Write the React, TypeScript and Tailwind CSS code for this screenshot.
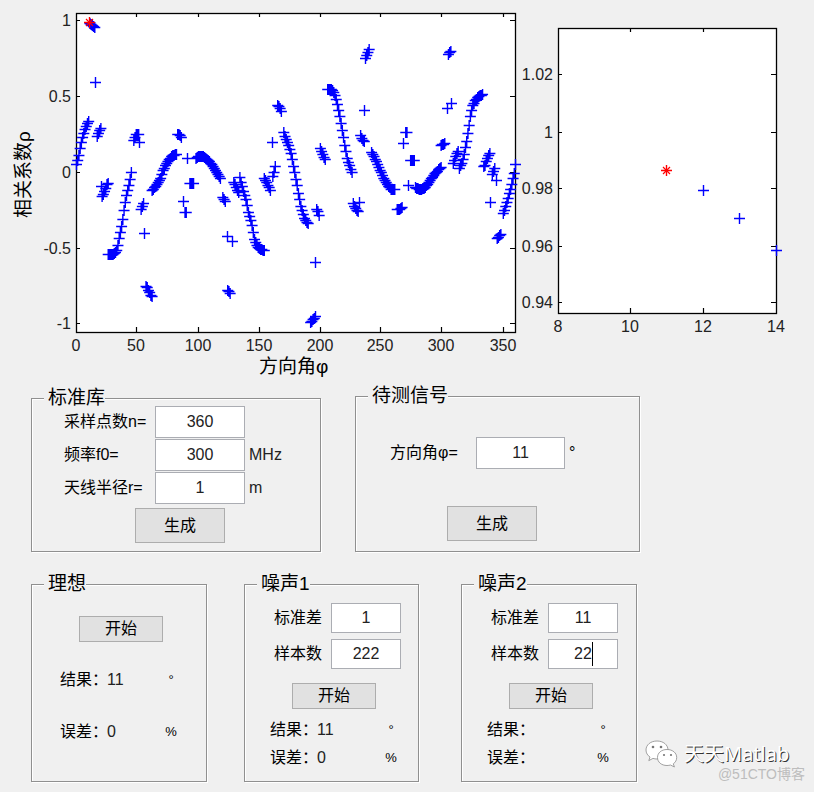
import { useState, type ReactNode } from 'react';

type Point = [number, number];

// Anchors of each branch of the correlation curve, in plot coordinates.
// A marker is drawn for every whole degree between the first and last anchor.
const BRANCHES: Point[][] = [
  [[76, 164], [78, 158], [79, 151], [81, 141], [84, 131], [86, 125], [88, 121]],
  [[90, 23], [91, 24], [92, 25], [94, 27]],
  [[95, 82]],
  [[97, 136], [100, 128]],
  [[101, 186]],
  [[102, 196], [104, 191], [107, 183]],
  [[108, 254], [112, 254], [115, 252], [117, 248], [119, 236], [122, 222], [124, 207], [126, 195], [129, 183], [131, 171]],
  [[133, 141], [134, 138], [136, 134], [138, 134]],
  [[139, 142]],
  [[141, 209], [143, 203]],
  [[144, 233]],
  [[146, 286], [151, 296]],
  [[152, 190], [155, 186], [160, 178], [163, 169], [167, 162], [171, 156], [176, 154]],
  [[178, 134], [179, 134], [181, 137]],
  [[183, 201]],
  [[185, 212], [186, 212]],
  [[187, 158]],
  [[190, 183], [193, 183]],
  [[196, 158], [198, 156], [203, 156], [207, 159], [212, 165], [216, 172], [220, 178]],
  [[222, 197], [225, 201]],
  [[227, 236]],
  [[227, 290], [230, 293]],
  [[232, 241]],
  [[233, 181], [238, 192]],
  [[239, 176], [241, 183], [243, 191], [246, 201], [248, 212], [251, 222], [254, 239], [257, 246], [260, 249], [263, 250]],
  [[264, 178], [270, 190]],
  [[272, 142]],
  [[272, 177], [274, 171], [275, 165]],
  [[277, 105], [279, 107], [281, 111]],
  [[283, 131], [285, 137], [288, 144], [291, 154], [293, 166], [296, 181], [298, 193], [300, 204], [302, 212], [304, 218], [307, 223]],
  [[310, 322], [312, 320], [315, 316]],
  [[315, 262]],
  [[317, 209], [319, 216]],
  [[320, 148], [325, 160]],
  [[327, 89], [331, 89], [334, 93], [337, 104], [339, 114], [341, 125], [343, 137], [345, 149], [347, 159], [350, 168], [352, 173]],
  [[353, 203], [355, 208], [357, 211]],
  [[359, 202]],
  [[360, 135], [363, 141]],
  [[364, 110]],
  [[365, 58], [367, 53], [369, 48]],
  [[371, 152], [375, 159], [378, 166], [382, 175], [385, 181], [388, 186], [391, 189], [394, 189]],
  [[397, 209], [399, 209], [401, 207]],
  [[403, 143]],
  [[405, 132], [406, 132]],
  [[408, 185]],
  [[410, 160], [413, 160]],
  [[415, 187], [419, 189], [424, 188], [429, 181], [434, 174], [440, 167]],
  [[441, 145], [444, 143]],
  [[447, 108]],
  [[448, 54], [450, 51]],
  [[451, 103]],
  [[453, 163], [457, 151]],
  [[459, 168], [462, 161], [464, 153], [466, 142], [468, 130], [470, 115], [472, 106], [475, 100], [478, 96], [482, 94]],
  [[484, 166], [489, 153]],
  [[490, 202]],
  [[492, 174], [494, 168]],
  [[496, 180]],
  [[497, 238], [500, 234]],
  [[503, 213], [505, 207], [508, 197], [510, 189], [512, 181], [514, 172], [515, 164]],
];

const DEGREE = 439 / 360;

function sample(branch: Point[]): Point[] {
  const first = branch[0];
  const last = branch[branch.length - 1];
  if (branch.length === 1) return [first];
  const points: Point[] = [];
  for (let deg = 0; deg <= 360; deg++) {
    const x = 76 + deg * DEGREE;
    if (x < first[0] - 0.8 || x > last[0] + 0.8) continue;
    let i = 1;
    while (i < branch.length - 1 && branch[i][0] < x) i++;
    const [x0, y0] = branch[i - 1];
    const [x1, y1] = branch[i];
    const t = Math.min(1, Math.max(0, (x - x0) / (x1 - x0)));
    points.push([x, Math.round(y0 + (y1 - y0) * t)]);
  }
  return points;
}

const CURVE = BRANCHES.flatMap(sample);

function Crosses({ points }: { points: Point[] }) {
  const d = points.map(([x, y]) => `M${x - 5} ${y + 0.5}h11M${x + 0.5} ${y - 5}v11`).join('');
  return <path d={d} stroke="#0000ff" strokeWidth="1.4" fill="none" />;
}

function Star({ x, y }: { x: number; y: number }) {
  return (
    <g transform={`translate(${x + 0.5} ${y + 0.5})`} stroke="#ff0000" strokeWidth="1.4" fill="none">
      <path d="M-5.5 0h11M0-5.5v11" />
      <path d="M-3.5-3.5l7 7M-3.5 3.5l7-7" strokeWidth="1.2" />
    </g>
  );
}

interface Tick {
  at: number;
  label: string;
}

interface AxesProps {
  left: number;
  top: number;
  right: number;
  bottom: number;
  xTicks: Tick[];
  yTicks: Tick[];
  children: ReactNode;
}

function Axes({ left, top, right, bottom, xTicks, yTicks, children }: AxesProps) {
  const ticks =
    xTicks
      .filter((t) => t.at > left && t.at < right)
      .map((t) => `M${t.at + 0.5} ${top}v4M${t.at + 0.5} ${bottom}v-5`)
      .join('') + yTicks.map((t) => `M${left} ${t.at + 0.5}h4M${right} ${t.at + 0.5}h-5`).join('');
  return (
    <>
      <rect
        x={left + 0.5}
        y={top + 0.5}
        width={right - left}
        height={bottom - top}
        fill="#fff"
        stroke="#000"
        strokeWidth="1.3"
      />
      <path d={ticks} stroke="#000" strokeWidth="1.2" />
      {children}
      <g className="fill-[#222] text-[16px]">
        {xTicks.map((t) => (
          <text key={t.label} x={t.at} y={bottom + 19} textAnchor="middle">
            {t.label}
          </text>
        ))}
        {yTicks.map((t) => (
          <text key={t.label} x={left - 5} y={t.at + 6} textAnchor="end">
            {t.label}
          </text>
        ))}
      </g>
    </>
  );
}

function CorrelationChart() {
  return (
    <svg viewBox="0 0 520 380" className="block h-auto w-full overflow-visible" role="img" aria-label="相关系数">
      <Axes
        left={76}
        top={13}
        right={515}
        bottom={332}
        xTicks={[
          { at: 76, label: '0' },
          { at: 136, label: '50' },
          { at: 198, label: '100' },
          { at: 259, label: '150' },
          { at: 320, label: '200' },
          { at: 380, label: '250' },
          { at: 441, label: '300' },
          { at: 503, label: '350' },
        ]}
        yTicks={[
          { at: 20, label: '1' },
          { at: 96, label: '0.5' },
          { at: 172, label: '0' },
          { at: 248, label: '-0.5' },
          { at: 323, label: '-1' },
        ]}
      >
        <Crosses points={CURVE} />
        <Star x={89} y={22} />
      </Axes>
      <text x={259} y={373} className="text-[19px]">
        方向角φ
      </text>
      <text transform="translate(30 218) rotate(-90)" className="text-[19px]">
        相关系数ρ
      </text>
    </svg>
  );
}

function DetailChart() {
  return (
    <svg viewBox="0 0 294 380" className="block h-auto w-full" role="img" aria-label="局部放大">
      <Axes
        left={38}
        top={28}
        right={256}
        bottom={313}
        xTicks={[
          { at: 38, label: '8' },
          { at: 110, label: '10' },
          { at: 183, label: '12' },
          { at: 256, label: '14' },
        ]}
        yTicks={[
          { at: 74, label: '1.02' },
          { at: 132, label: '1' },
          { at: 188, label: '0.98' },
          { at: 246, label: '0.96' },
          { at: 302, label: '0.94' },
        ]}
      >
        <Crosses points={[[183, 190], [219, 218], [256, 250]]} />
        <Star x={146} y={170} />
      </Axes>
    </svg>
  );
}

// Etched frame: a grey line with a white one along its lower right side.
function Group({ title, className, children }: { title: string; className: string; children: ReactNode }) {
  return (
    <fieldset
      className={`min-w-0 border border-[#909090] px-px shadow-[1px_1px_0_#fff,inset_1px_1px_0_#fff] ${className}`}
    >
      <legend className="ml-[11px] h-4 bg-[#f0f0f0] pl-1 text-[19px] leading-4 whitespace-nowrap">{title}</legend>
      {children}
    </fieldset>
  );
}

function NumberField({ id, initial, className }: { id: string; initial: string; className: string }) {
  const [value, setValue] = useState(initial);
  return (
    <input
      id={id}
      type="text"
      value={value}
      onChange={(e) => setValue(e.target.value)}
      className={`block border border-[#abadb3] bg-white text-center text-[16px] text-[#222] outline-none ${className}`}
    />
  );
}

function PushButton({ className, children }: { className: string; children: ReactNode }) {
  return (
    <button type="button" className={`block border border-[#adadad] bg-[#e1e1e1] leading-none ${className}`}>
      {children}
    </button>
  );
}

interface ReadoutProps {
  label: string;
  value: string;
  unit: string;
  valueWidth: string;
}

function Readout({ label, value, unit, valueWidth }: ReadoutProps) {
  return (
    <div className="flex h-7 items-center">
      <span className="w-[47px] whitespace-nowrap">{label}</span>
      <output className={`text-[#222] ${valueWidth}`}>{value}</output>
      <span className="w-3 text-center text-[13px]">{unit}</span>
    </div>
  );
}

interface NoiseProps {
  title: string;
  id: string;
  deviation: string;
  samples: string;
  result: string;
  error: string;
  valueWidth: string;
  caret?: boolean;
  className: string;
}

function NoiseGroup({ title, id, deviation, samples, result, error, valueWidth, caret, className }: NoiseProps) {
  return (
    <Group title={title} className={className}>
      <div className="grid grid-cols-[57px_70px] items-center gap-y-[6px] pt-[11px] pl-7">
        <label htmlFor={`${id}-std`}>标准差</label>
        <NumberField id={`${id}-std`} initial={deviation} className="h-[30px] w-[70px]" />
        <label htmlFor={`${id}-count`}>样本数</label>
        <div className="relative">
          <NumberField id={`${id}-count`} initial={samples} className="h-[30px] w-[70px]" />
          {caret && <span className="absolute top-[3px] left-[44px] h-6 w-px bg-black" />}
        </div>
      </div>
      <PushButton className="mt-[14px] ml-[46px] h-[26px] w-[84px]">开始</PushButton>
      <div className="mt-[7px] pb-[9px] pl-6">
        <Readout label="结果：" value={result} unit="°" valueWidth={valueWidth} />
        <Readout label="误差：" value={error} unit="%" valueWidth={valueWidth} />
      </div>
    </Group>
  );
}

function Watermark() {
  return (
    <div className="flex flex-col justify-end pl-2">
      <div className="flex h-6 items-center gap-[6px]">
        <svg width="33" height="28" viewBox="0 0 33 28" fill="#fff" stroke="#8a8a8a" strokeWidth="0.8">
          <path d="M12 1C5.700 1 1 4.800 1 10c0 3 1.500 5.400 4 7l-1.200 3.600L8 18.400c1.300.4 2.600.6 4 .6 6.300 0 11-3.800 11-9S18.300 1 12 1z" />
          <path d="M22 9.500c-5.600 0-9.500 3.400-9.500 8s3.900 8 9.500 8c1.300 0 2.400-.2 3.500-.5l3.900 2-1.100-3.200c2.100-1.400 3.400-3.600 3.400-6.300 0-4.600-4.100-8-9.700-8z" />
          <g fill="#777" stroke="none">
            <circle cx="8" cy="7" r="1.300" />
            <circle cx="16" cy="7" r="1.300" />
            <circle cx="19" cy="15" r="1.100" />
            <circle cx="26" cy="15" r="1.100" />
          </g>
        </svg>
        <span className="text-[20px] leading-6 whitespace-nowrap text-white [font-family:'Noto_Sans','Noto_Sans_CJK_SC',sans-serif] [text-shadow:1px_1px_0_#333]">
          天天Matlab
        </span>
      </div>
      <span className="pr-[9px] text-right text-[14px] leading-4 text-[#bdbdbd]">@51CTO博客</span>
    </div>
  );
}

export default function App() {
  return (
    <main className="min-h-screen bg-[#f0f0f0] font-['Liberation_Sans','Noto_Sans_CJK_SC',sans-serif] text-[16px] leading-5 text-black">
      <section className="grid grid-cols-[520fr_294fr]">
        <CorrelationChart />
        <DetailChart />
      </section>

      <section className="mt-2 grid grid-cols-[31fr_290fr_34fr_285fr_174fr] items-end">
        <Group title="标准库" className="col-start-2">
          <div className="grid grid-cols-[91px_90px_auto] items-center gap-y-px pl-[31px]">
            <label htmlFor="points">采样点数n=</label>
            <NumberField id="points" initial="360" className="h-8 w-[90px]" />
            <span />
            <label htmlFor="frequency">频率f0=</label>
            <NumberField id="frequency" initial="300" className="h-8 w-[90px]" />
            <span className="pl-1 text-[#222]">MHz</span>
            <label htmlFor="radius">天线半径r=</label>
            <NumberField id="radius" initial="1" className="h-8 w-[90px]" />
            <span className="pl-1 text-[#222]">m</span>
          </div>
          <PushButton className="mt-1 mb-2 ml-[102px] h-[35px] w-[90px]">生成</PushButton>
        </Group>

        <Group title="待测信号" className="col-start-4">
          <div className="flex items-center pt-[33px] pl-[33px]">
            <label htmlFor="angle" className="w-[86px]">
              方向角φ=
            </label>
            <NumberField id="angle" initial="11" className="h-8 w-[89px]" />
            <span className="pl-1">°</span>
          </div>
          <PushButton className="mt-[37px] mb-[10px] ml-[90px] h-[35px] w-[90px]">生成</PushButton>
        </Group>
      </section>

      <section className="mt-6 grid grid-cols-[31fr_176fr_37fr_175fr_42fr_176fr_177fr] pb-[9px]">
        <Group title="理想" className="col-start-2">
          <PushButton className="mt-6 ml-[46px] h-[26px] w-[84px]">开始</PushButton>
          <div className="flex flex-col gap-6 pt-6 pl-[27px]">
            <Readout label="结果：" value="11" unit="°" valueWidth="w-[58px]" />
            <Readout label="误差：" value="0" unit="%" valueWidth="w-[58px]" />
          </div>
        </Group>
        <NoiseGroup
          title="噪声1"
          id="noise1"
          deviation="1"
          samples="222"
          result="11"
          error="0"
          valueWidth="w-[68px]"
          className="col-start-4"
        />
        <NoiseGroup
          title="噪声2"
          id="noise2"
          deviation="11"
          samples="22"
          result=""
          error=""
          valueWidth="w-[63px]"
          caret
          className="col-start-6"
        />
        <Watermark />
      </section>
    </main>
  );
}
